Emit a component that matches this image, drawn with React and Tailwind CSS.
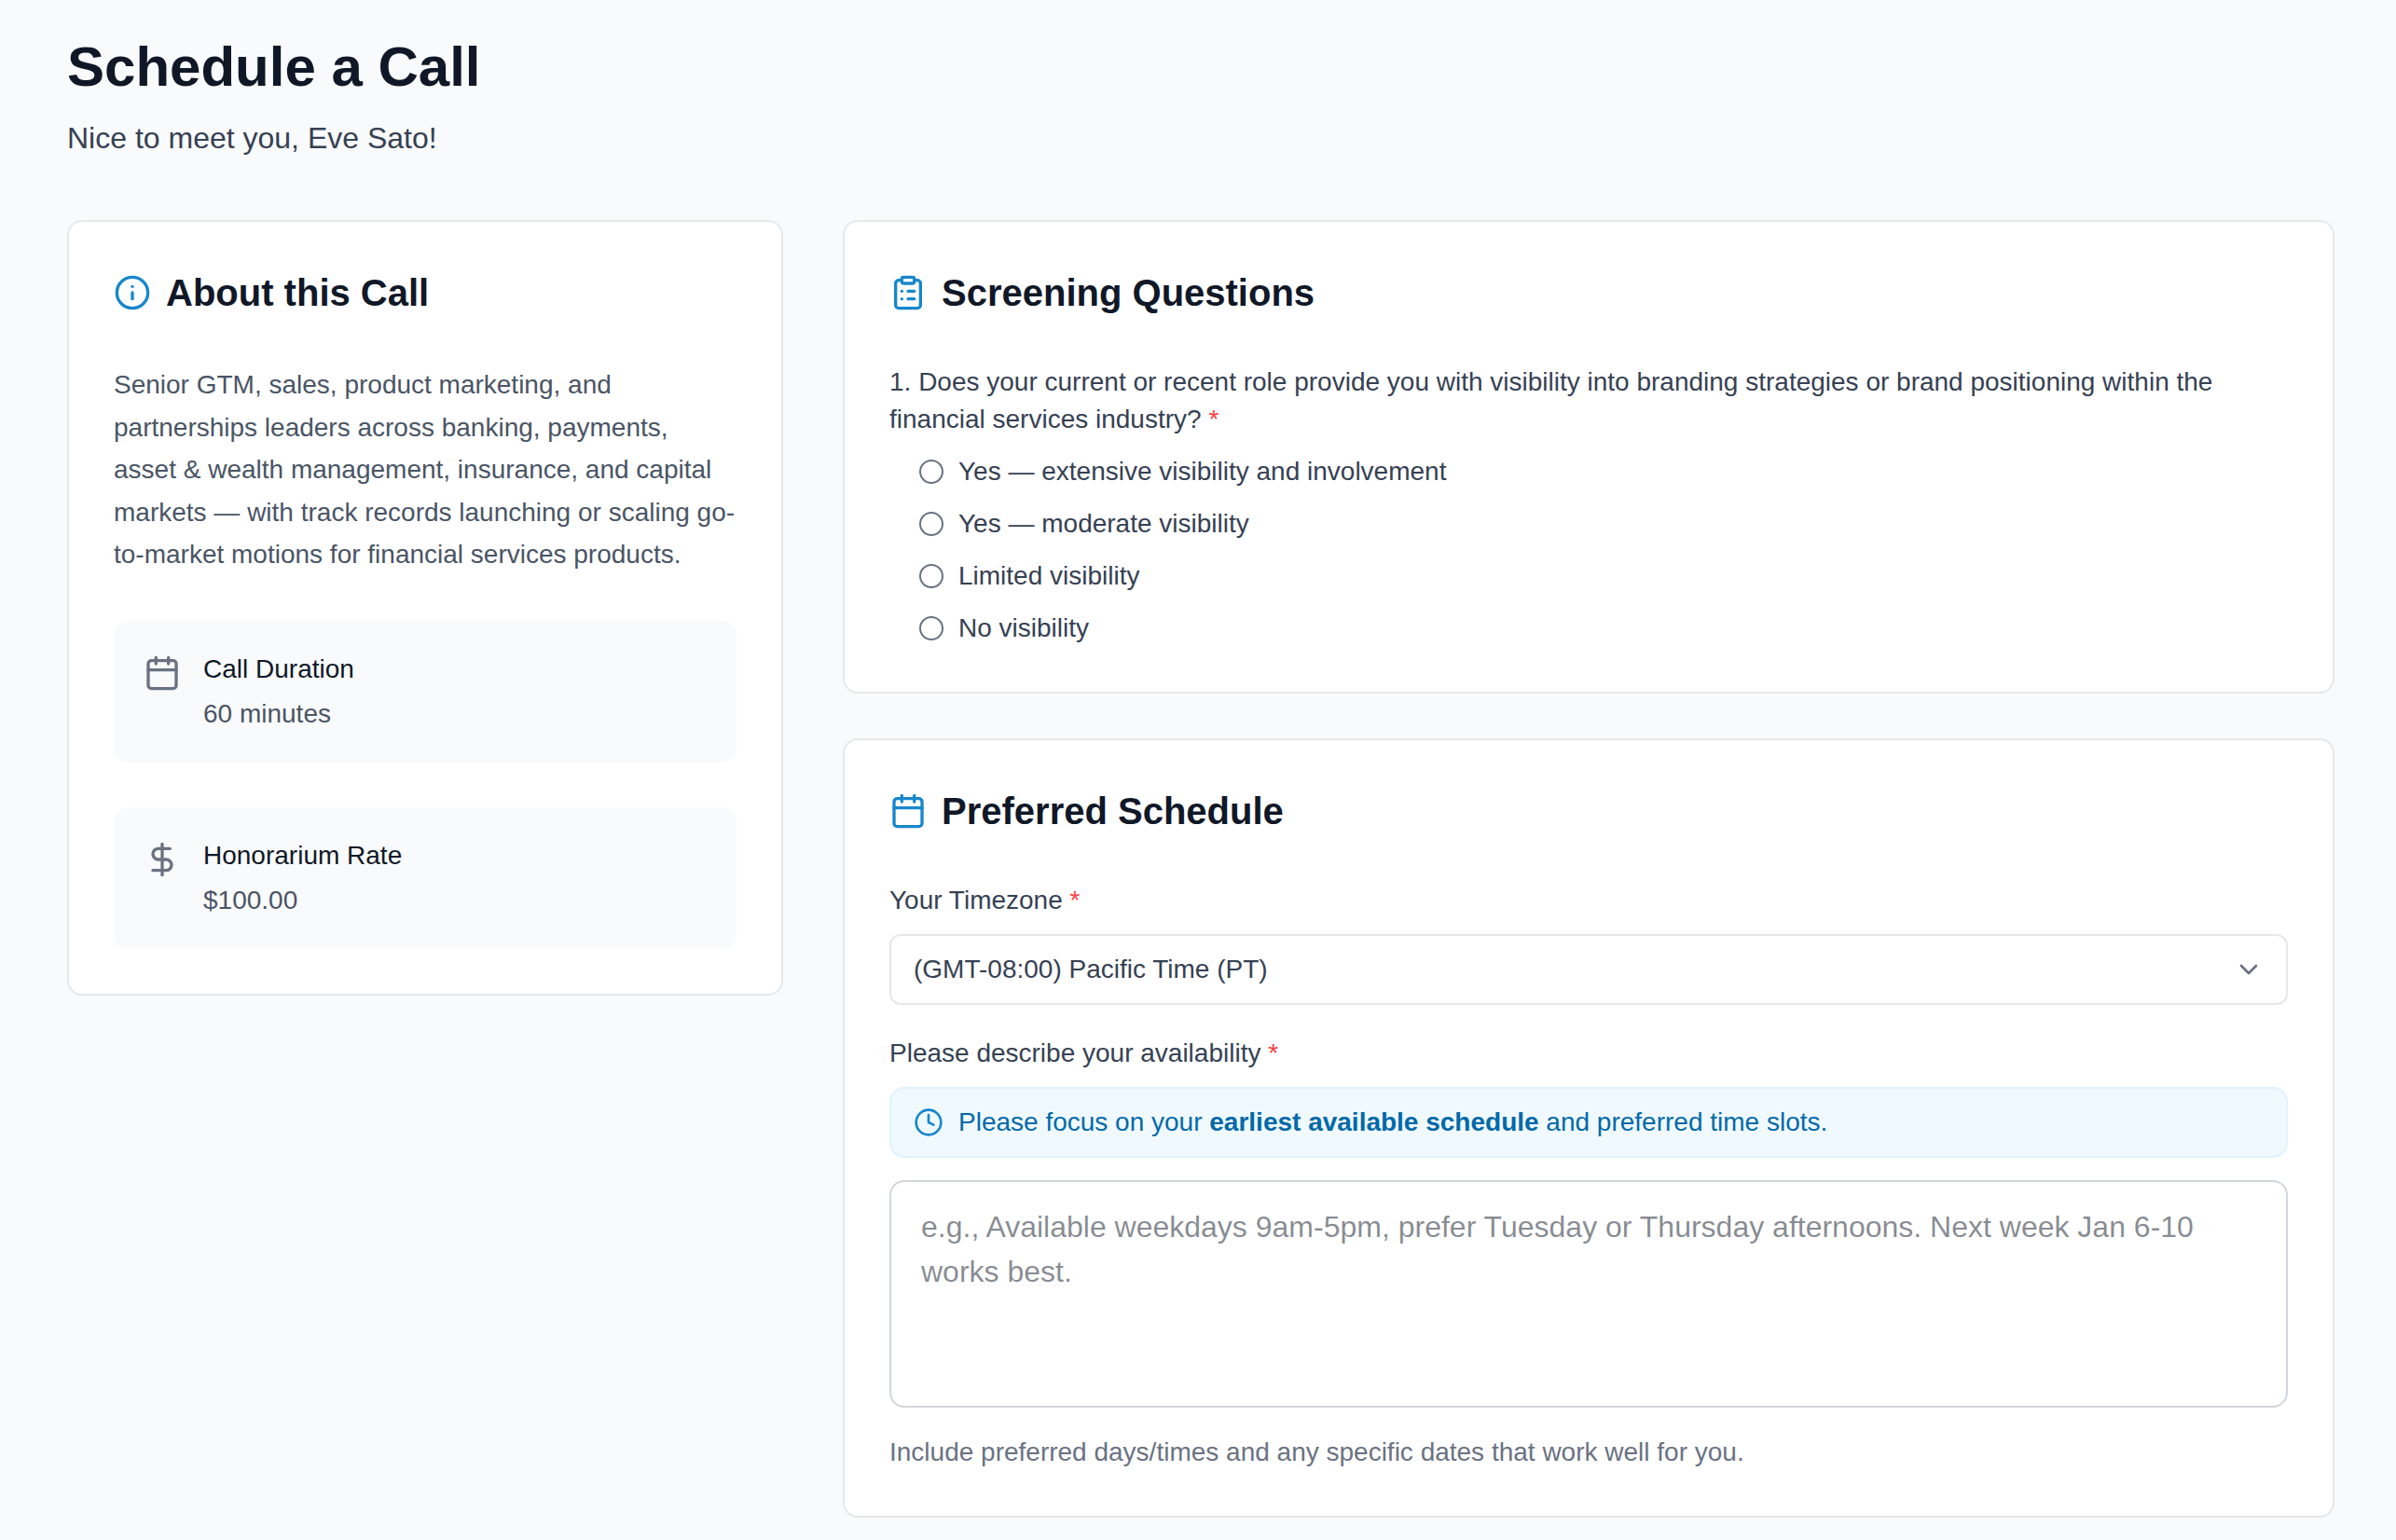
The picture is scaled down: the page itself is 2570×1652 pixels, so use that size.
// ScheduleCall.jsx
import { useState } from 'react';
import { Info, Calendar, DollarSign, ClipboardList, Clock, ChevronDown } from 'lucide-react';

const visibilityOptions = [
  'Yes — extensive visibility and involvement',
  'Yes — moderate visibility',
  'Limited visibility',
  'No visibility',
];

const timezones = [
  '(GMT-08:00) Pacific Time (PT)',
  '(GMT-07:00) Mountain Time (MT)',
  '(GMT-06:00) Central Time (CT)',
  '(GMT-05:00) Eastern Time (ET)',
];

const Card = ({ icon: Icon, title, children }) => (
  <section className="bg-white rounded-2xl border-2 border-gray-200 p-12">
    <h2 className="flex items-center gap-4 mb-12 text-[40px] leading-14 font-bold text-gray-900">
      <Icon className="size-10 shrink-0 text-[#1787cc]" />
      {title}
    </h2>
    {children}
  </section>
);

const Detail = ({ icon: Icon, label, value }) => (
  <div className="flex items-start gap-6 mt-12 p-8 bg-gray-50 rounded-2xl">
    <Icon className="size-10 shrink-0 mt-1 text-gray-500" />
    <div>
      <p className="mb-2 text-gray-900">{label}</p>
      <p className="text-gray-600">{value}</p>
    </div>
  </div>
);

const Required = () => <span className="text-[#fb4146]">*</span>;

const App = () => {
  const [visibility, setVisibility] = useState('');
  const [timezone, setTimezone] = useState(timezones[0]);
  const [availability, setAvailability] = useState('');

  return (
    <div className="min-h-screen bg-gray-50 pt-9 pb-6 pl-[72px] pr-[66px] font-['Liberation_Sans',Arial,sans-serif] text-[28px] leading-10 text-gray-700">
      <header className="mb-16">
        <h1 className="mb-4 text-6xl leading-18 font-bold text-gray-900">Schedule a Call</h1>
        <p className="text-[32px] leading-12">Nice to meet you, Eve Sato!</p>
      </header>

      <main className="grid grid-cols-3 items-start gap-16">
        <Card icon={Info} title="About this Call">
          <p className="leading-relaxed text-gray-600">
            Senior GTM, sales, product marketing, and partnerships leaders across banking, payments,
            asset & wealth management, insurance, and capital markets — with track records launching
            or scaling go-to-market motions for financial services products.
          </p>
          <Detail icon={Calendar} label="Call Duration" value="60 minutes" />
          <Detail icon={DollarSign} label="Honorarium Rate" value="$100.00" />
        </Card>

        <form className="col-span-2 flex flex-col gap-12">
          <Card icon={ClipboardList} title="Screening Questions">
            <fieldset>
              <legend className="mb-4">
                1. Does your current or recent role provide you with visibility into branding
                strategies or brand positioning within the financial services industry? <Required />
              </legend>
              <div className="flex flex-col items-start gap-4 pl-8">
                {visibilityOptions.map((option) => (
                  <label key={option} className="flex items-center gap-4">
                    <input
                      type="radio"
                      name="visibility"
                      value={option}
                      checked={visibility === option}
                      onChange={() => setVisibility(option)}
                      className="appearance-none size-[26px] rounded-full border-2 border-gray-500 bg-white checked:border-8 checked:border-sky-600"
                    />
                    {option}
                  </label>
                ))}
              </div>
            </fieldset>
          </Card>

          <Card icon={Calendar} title="Preferred Schedule">
            <label htmlFor="timezone" className="block mb-4">
              Your Timezone <Required />
            </label>
            <div className="relative mb-8">
              <select
                id="timezone"
                value={timezone}
                onChange={(e) => setTimezone(e.target.value)}
                className="block w-full appearance-none rounded-xl border-2 border-gray-200 bg-white px-6 py-4 leading-10"
              >
                {timezones.map((tz) => (
                  <option key={tz}>{tz}</option>
                ))}
              </select>
              <ChevronDown className="pointer-events-none absolute inset-y-0 right-[26px] my-auto size-8 text-gray-500" />
            </div>

            <label htmlFor="availability" className="block mb-4">
              Please describe your availability <Required />
            </label>
            <div className="flex items-center gap-4 mb-6 rounded-2xl border-2 border-sky-100 bg-sky-50 px-6 py-4 text-sky-700">
              <Clock className="size-8 shrink-0 text-[#1787cc]" />
              <p>
                Please focus on your <strong>earliest available schedule</strong> and preferred time
                slots.
              </p>
            </div>
            <textarea
              id="availability"
              rows={4}
              value={availability}
              onChange={(e) => setAvailability(e.target.value)}
              placeholder="e.g., Available weekdays 9am-5pm, prefer Tuesday or Thursday afternoons. Next week Jan 6-10 works best."
              className="block w-full resize-none rounded-2xl border-2 border-gray-300 bg-white px-8 py-6 text-[32px] leading-12 text-gray-900"
            />
            <p className="mt-7 text-gray-500">
              Include preferred days/times and any specific dates that work well for you.
            </p>
          </Card>
        </form>
      </main>
    </div>
  );
};

export default App;
